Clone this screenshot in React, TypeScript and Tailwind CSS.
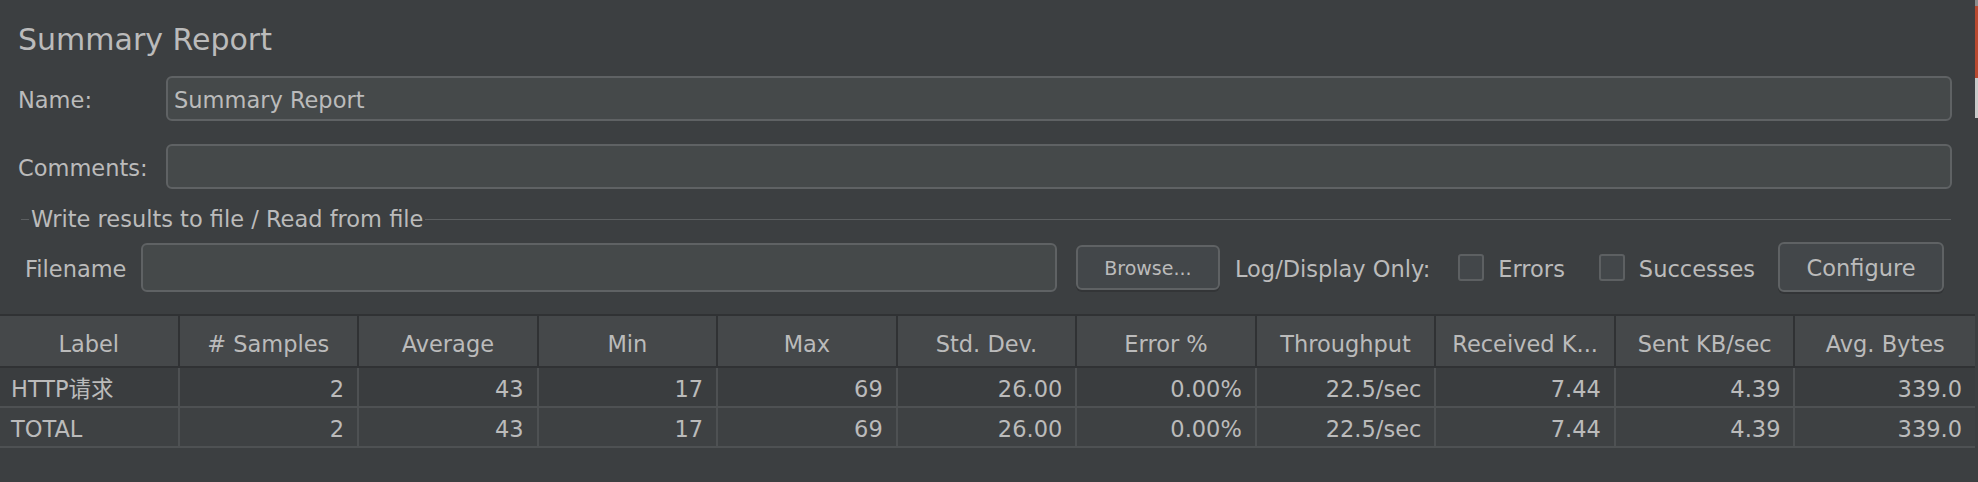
import React from "react";

const headers = [
  "Label",
  "# Samples",
  "Average",
  "Min",
  "Max",
  "Std. Dev.",
  "Error %",
  "Throughput",
  "Received K...",
  "Sent KB/sec",
  "Avg. Bytes",
];

const rows = [
  ["HTTP请求", "2", "43", "17", "69", "26.00", "0.00%", "22.5/sec", "7.44", "4.39", "339.0"],
  ["TOTAL", "2", "43", "17", "69", "26.00", "0.00%", "22.5/sec", "7.44", "4.39", "339.0"],
];

const Checkbox = ({ label, className = "" }: { label: string; className?: string }) => (
  <div className={`flex items-center ${className}`}>
    <div className="h-[27px] w-[26px] rounded-[3px] border-2 border-[#5d6062] bg-[#43474a]" />
    <span className="ml-[14px] pt-[5px]">{label}</span>
  </div>
);

export default function App() {
  return (
    <div className="flex h-[482px] w-full bg-[#3c3f41] font-['DejaVu_Sans','Noto_Sans_CJK_SC',sans-serif] text-[22.5px] text-[#bbbbbb]">
      <div className="flex min-w-0 flex-1 flex-col">
        {/* title */}
        <div className="pl-[18px] pt-[22px] text-[30px] leading-[36px]">Summary Report</div>

        {/* name */}
        <div className="mt-[18px] flex items-center pl-[18px] pr-[23px]">
          <div className="w-[148px] pt-[5px]">Name:</div>
          <div className="flex h-[45px] flex-1 items-center rounded-md border-2 border-[#5f6264] bg-[#45494a] pl-[6px] pt-[5px]">
            Summary Report
          </div>
        </div>

        {/* comments */}
        <div className="mt-[23px] flex items-center pl-[18px] pr-[23px]">
          <div className="w-[148px] pt-[5px]">Comments:</div>
          <div className="h-[45px] flex-1 rounded-md border-2 border-[#5f6264] bg-[#45494a]" />
        </div>

        {/* fieldset title */}
        <div className="mt-[16px] flex h-[28px] items-center pl-[21px] pr-[24px]">
          <div className="h-px w-[8px] bg-[#5c5f61]" />
          <span className="px-[2px] leading-[28px]">Write results to file / Read from file</span>
          <div className="h-px flex-1 bg-[#5c5f61]" />
        </div>

        {/* filename row */}
        <div className="mt-[9px] flex h-[50px] items-center pl-[25px] pr-[31px]">
          <span className="pt-[5px]">Filename</span>
          <div className="ml-[15px] h-[49px] flex-1 rounded-md border-2 border-[#5f6264] bg-[#45494a]" />
          <button className="ml-[19px] h-[45px] w-[144px] rounded-md border-2 border-[#5f6264] bg-[#43474a] pt-[3px] text-[19px] text-[#bbbbbb] shadow-[0_2px_0_#333537]">
            Browse...
          </button>
          <span className="ml-[15px] pt-[5px]">Log/Display Only:</span>
          <Checkbox label="Errors" className="ml-[28px]" />
          <Checkbox label="Successes" className="ml-[34px]" />
          <button className="ml-[23px] h-[50px] w-[166px] rounded-md border-2 border-[#5f6264] bg-[#43474a] pt-[4px] text-[22.5px] text-[#bbbbbb] shadow-[0_2px_0_#333537]">
            Configure
          </button>
        </div>

        {/* table */}
        <div className="mt-[22px]">
          <div className="grid grid-cols-11 border-y-2 border-[#303234] bg-[#45484a]">
            {headers.map((h, i) => (
              <div
                key={h}
                className={`flex h-[50px] items-center justify-center whitespace-nowrap pt-[7px] ${i < 10 ? "border-r-2 border-[#303234]" : ""}`}
              >
                {h}
              </div>
            ))}
          </div>
          {rows.map((r, ri) => (
            <div
              key={ri}
              className={`grid grid-cols-11 border-b-2 border-[#4e5153] ${ri === 0 ? "bg-[#3a3d3f]" : "bg-[#3e4143]"}`}
            >
              {r.map((c, ci) => (
                <div
                  key={ci}
                  className={`flex h-[38px] items-center whitespace-nowrap pt-[5px] ${
                    ci === 0 ? "justify-start pl-[11px]" : "justify-end pr-[13px]"
                  } ${ci < 10 ? "border-r-2 border-[#4e5153]" : ""}`}
                >
                  {c}
                </div>
              ))}
            </div>
          ))}
        </div>
      </div>

      {/* window edge */}
      <div className="flex w-[3px] flex-col">
        <div className="h-[6px] bg-[#8c8c8c]" />
        <div className="h-[72px] bg-[#b9492f]" />
        <div className="h-[40px] bg-[#c9c9c9]" />
        <div className="flex-1" />
      </div>
    </div>
  );
}
